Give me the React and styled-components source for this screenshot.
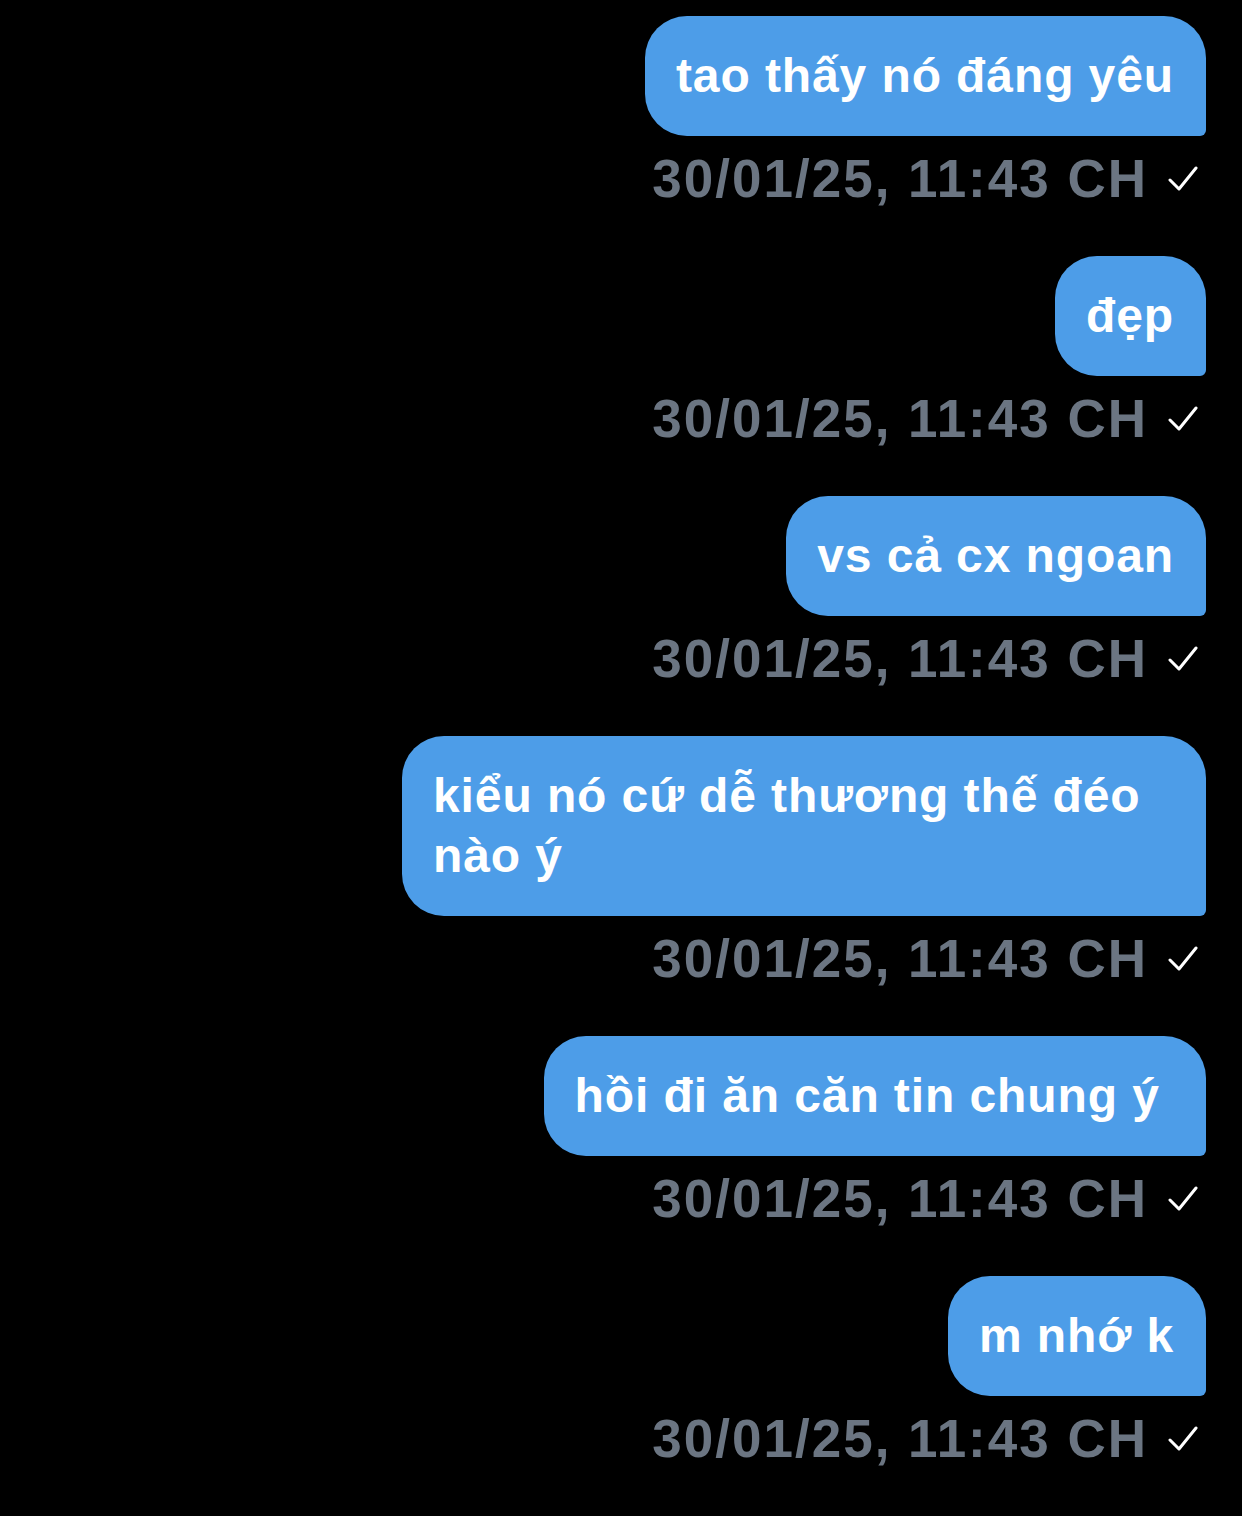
import React from 'react';
import styled, { createGlobalStyle } from 'styled-components';

const Global = createGlobalStyle`
  html, body { margin: 0; padding: 0; background: #000; }
  body { font-family: "Liberation Sans", Arial, sans-serif; }
`;

const Thread = styled.div`
  display: flex;
  flex-direction: column;
  align-items: flex-end;
  padding: 16px 36px 0 0;
  min-height: 1516px;
  box-sizing: border-box;
`;

const Group = styled.div`
  display: flex;
  flex-direction: column;
  align-items: flex-end;
  margin-bottom: 47px;
`;

const Bubble = styled.div`
  box-sizing: border-box;
  max-width: 804px;
  padding: 30px 32px 30px 31px;
  background: #4d9de8;
  color: #fff;
  font-size: 48px;
  font-weight: 700;
  line-height: 60px;
  border-radius: 42px 42px 6px 42px;
  letter-spacing: 0.9px;
`;

const Meta = styled.div`
  display: flex;
  align-items: center;
  gap: 20px;
  margin-top: 13px;
  padding-right: 8px;
  height: 60px;
`;

const Stamp = styled.span`
  color: #6b7582;
  font-size: 53px;
  font-weight: 700;
  letter-spacing: 2px;
  line-height: 60px;
`;

const Check = () => (
  <svg width="30" height="28" viewBox="0 0 30 28" fill="none">
    <path d="M2 15 L11 24 L28 3" stroke="#fff" strokeWidth="3" strokeLinecap="round" strokeLinejoin="round" />
  </svg>
);

const messages = [
  'tao thấy nó đáng yêu',
  'đẹp',
  'vs cả cx ngoan',
  'kiểu nó cứ dễ thương thế đéo nào ý',
  'hồi đi ăn căn tin chung ý\u00a0',
  'm nhớ k',
];

export default function App() {
  return (
    <>
      <Global />
      <Thread>
        {messages.map((m, i) => (
          <Group key={i}>
            <Bubble>{m}</Bubble>
            <Meta>
              <Stamp>30/01/25, 11:43 CH</Stamp>
              <Check />
            </Meta>
          </Group>
        ))}
      </Thread>
    </>
  );
}
